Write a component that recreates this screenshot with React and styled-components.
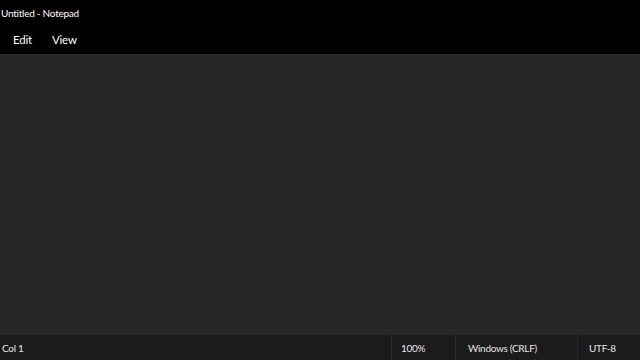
import React from "react";
import styled, { createGlobalStyle } from "styled-components";

const Global = createGlobalStyle`
  html, body { margin: 0; padding: 0; background: #000; }
  body { font-family: "Lato", "Noto Sans", sans-serif; -webkit-font-smoothing: antialiased; }
  #root { height: 360px; }
`;

const Window = styled.div`
  width: 640px;
  height: 360px;
  display: flex;
  flex-direction: column;
  background: #000;
  color: #fff;
`;

const TitleBar = styled.div`
  height: 25px;
  display: flex;
  align-items: center;
  padding-left: 1px;
  font-size: 10px;
  letter-spacing: -0.25px;
  color: #fff;
`;

const MenuBar = styled.div`
  height: 29px;
  display: flex;
  align-items: center;
  padding-left: 5px;
`;

const MenuItem = styled.span`
  padding: 0 8px;
  font-size: 11.5px;
  letter-spacing: -0.2px;
  color: #fff;
  margin-right: ${(p) => p.$gap || 0}px;
`;

const Editor = styled.div`
  flex: 1;
  background: #272727;
`;

const StatusBar = styled.div`
  height: 25px;
  display: flex;
  align-items: center;
  background: #1b1b1b;
  font-size: 10px;
  letter-spacing: -0.3px;
  color: #e6e6e6;
`;

const StatusCell = styled.div`
  height: 100%;
  display: flex;
  align-items: center;
  box-sizing: border-box;
  width: ${(p) => (p.$w ? `${p.$w}px` : "auto")};
  flex: ${(p) => (p.$grow ? 1 : "none")};
  padding-left: ${(p) => p.$pad}px;
  border-left: ${(p) => (p.$sep ? "1px solid #2a2a2a" : "none")};
`;

export default function App() {
  return (
    <>
      <Global />
      <Window>
        <TitleBar>Untitled - Notepad</TitleBar>
        <MenuBar>
          <MenuItem $gap={4}>Edit</MenuItem>
          <MenuItem>View</MenuItem>
        </MenuBar>
        <Editor />
        <StatusBar>
          <StatusCell $grow $pad={2}>Col 1</StatusCell>
          <StatusCell $w={64} $pad={9} $sep>100%</StatusCell>
          <StatusCell $w={122} $pad={12} $sep>Windows (CRLF)</StatusCell>
          <StatusCell $w={63} $pad={11} $sep>UTF-8</StatusCell>
        </StatusBar>
      </Window>
    </>
  );
}
